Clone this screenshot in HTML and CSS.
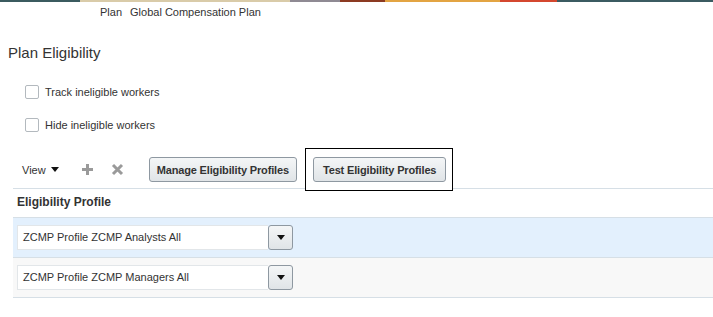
FILE: index.html
```html
<!DOCTYPE html>
<html lang="en">
<head>
    <meta charset="UTF-8">
    <meta name="viewport" content="width=device-width, initial-scale=1.0">
    <title>Plan Eligibility</title>
    <link rel="stylesheet" href="styles.css">
</head>
<body>
    <div class="brand-strip"></div>
    <div class="page-header">
        <span>Plan</span>
        <span>Global Compensation Plan</span>
    </div>

    <h1 class="page-title">Plan Eligibility</h1>

    <div class="options">
        <label class="option"><span class="checkbox"></span>Track ineligible workers</label>
        <label class="option"><span class="checkbox"></span>Hide ineligible workers</label>
    </div>

    <div class="table-panel">
        <div class="toolbar">
            <span class="view-menu">View <span class="down-arrow"></span></span>
            <span class="tool-icon add-icon">
                <svg width="13" height="13" viewBox="0 0 13 13"><path d="M6.5 1v11M1 6.5h11" stroke="#9a9a9a" stroke-width="3"/></svg>
            </span>
            <span class="tool-icon delete-icon">
                <svg width="13" height="13" viewBox="0 0 13 13"><path d="M2 2l9 9M11 2l-9 9" stroke="#9a9a9a" stroke-width="3"/></svg>
            </span>
            <button class="btn">Manage Eligibility Profiles</button>
            <div class="highlight">
                <button class="btn btn-wide">Test Eligibility Profiles</button>
            </div>
        </div>

        <div class="table-head">Eligibility Profile</div>

        <div class="table-row selected">
            <div class="select">
                <span class="select-value">ZCMP Profile ZCMP Analysts All</span>
                <span class="select-button"><span class="down-arrow"></span></span>
            </div>
        </div>
        <div class="table-row">
            <div class="select">
                <span class="select-value">ZCMP Profile ZCMP Managers All</span>
                <span class="select-button"><span class="down-arrow"></span></span>
            </div>
        </div>
    </div>
</body>
</html>
```

FILE: styles.css
```css
body {
    margin: 0;
    font-family: "Liberation Sans", Arial, sans-serif;
    font-size: 11px;
    color: #333;
    background: #fff;
}
.brand-strip {
    height: 2px;
    background: linear-gradient(90deg,
        #3b5b5f 0, #3b5b5f 80px,
        #d9cba9 80px, #d9cba9 290px,
        #8f8a93 290px, #8f8a93 340px,
        #8c3a22 340px, #8c3a22 385px,
        #e3a443 385px, #e3a443 500px,
        #d4472f 500px, #d4472f 557px,
        #3b5b61 557px, #3b5b61 100%);
}
.page-header {
    height: 20px;
    line-height: 20px;
    padding-left: 100px;
    display: flex;
    gap: 8px;
}
.page-title {
    margin: 22px 0 0 8px;
    font-size: 15px;
    line-height: 18px;
    font-weight: normal;
}
.options {
    margin: 20px 0 0 25px;
}
.option {
    display: flex;
    align-items: center;
    gap: 6px;
    height: 20px;
    margin-bottom: 13px;
}
.checkbox {
    width: 12px;
    height: 12px;
    border: 1px solid #b3b9be;
    border-radius: 2px;
    background: #fff;
}
.table-panel {
    margin: 6px 0 0 13px;
}
.toolbar {
    display: flex;
    align-items: center;
    height: 25px;
    padding: 9px 0 6px 9px;
    border-bottom: 1px solid #d6dfe6;
}
.view-menu {
    display: flex;
    align-items: center;
    gap: 5px;
}
.down-arrow {
    width: 0;
    height: 0;
    border-left: 4px solid transparent;
    border-right: 4px solid transparent;
    border-top: 5px solid #111;
}
.tool-icon {
    display: flex;
}
.add-icon {
    margin-left: 22px;
}
.delete-icon {
    margin-left: 17px;
    margin-right: 25px;
}
.btn {
    height: 25px;
    padding: 0 7px;
    font-family: inherit;
    font-size: 11px;
    font-weight: bold;
    letter-spacing: -0.15px;
    color: #333;
    border: 1px solid #8e98a1;
    border-radius: 3px;
    background: linear-gradient(#f4f6f7, #e0e4e7);
}
.btn-wide {
    padding: 0 9px;
}
.highlight {
    position: relative;
    z-index: 1;
    margin-left: 8px;
    padding: 8px 6px 8px 7px;
    border: 1px solid #000;
    background: #fff;
}
.table-head {
    height: 28px;
    line-height: 27px;
    padding-left: 4px;
    font-size: 12px;
    font-weight: bold;
    border-bottom: 1px solid #d6dfe6;
}
.table-row {
    height: 25px;
    padding: 7px 0 7px 4px;
    background: #f8f8f8;
    border-bottom: 1px solid #d6dfe6;
}
.table-row.selected {
    background: #e3f0fd;
}
.select {
    display: flex;
    height: 25px;
}
.select-value {
    width: 245px;
    padding-left: 5px;
    line-height: 23px;
    background: #fff;
    border: 1px solid #e2e6e9;
    border-right: none;
}
.select-button {
    width: 23px;
    display: flex;
    align-items: center;
    justify-content: center;
    border: 1px solid #8e98a1;
    border-radius: 3px;
    background: linear-gradient(#f4f6f7, #e0e4e7);
}
```
